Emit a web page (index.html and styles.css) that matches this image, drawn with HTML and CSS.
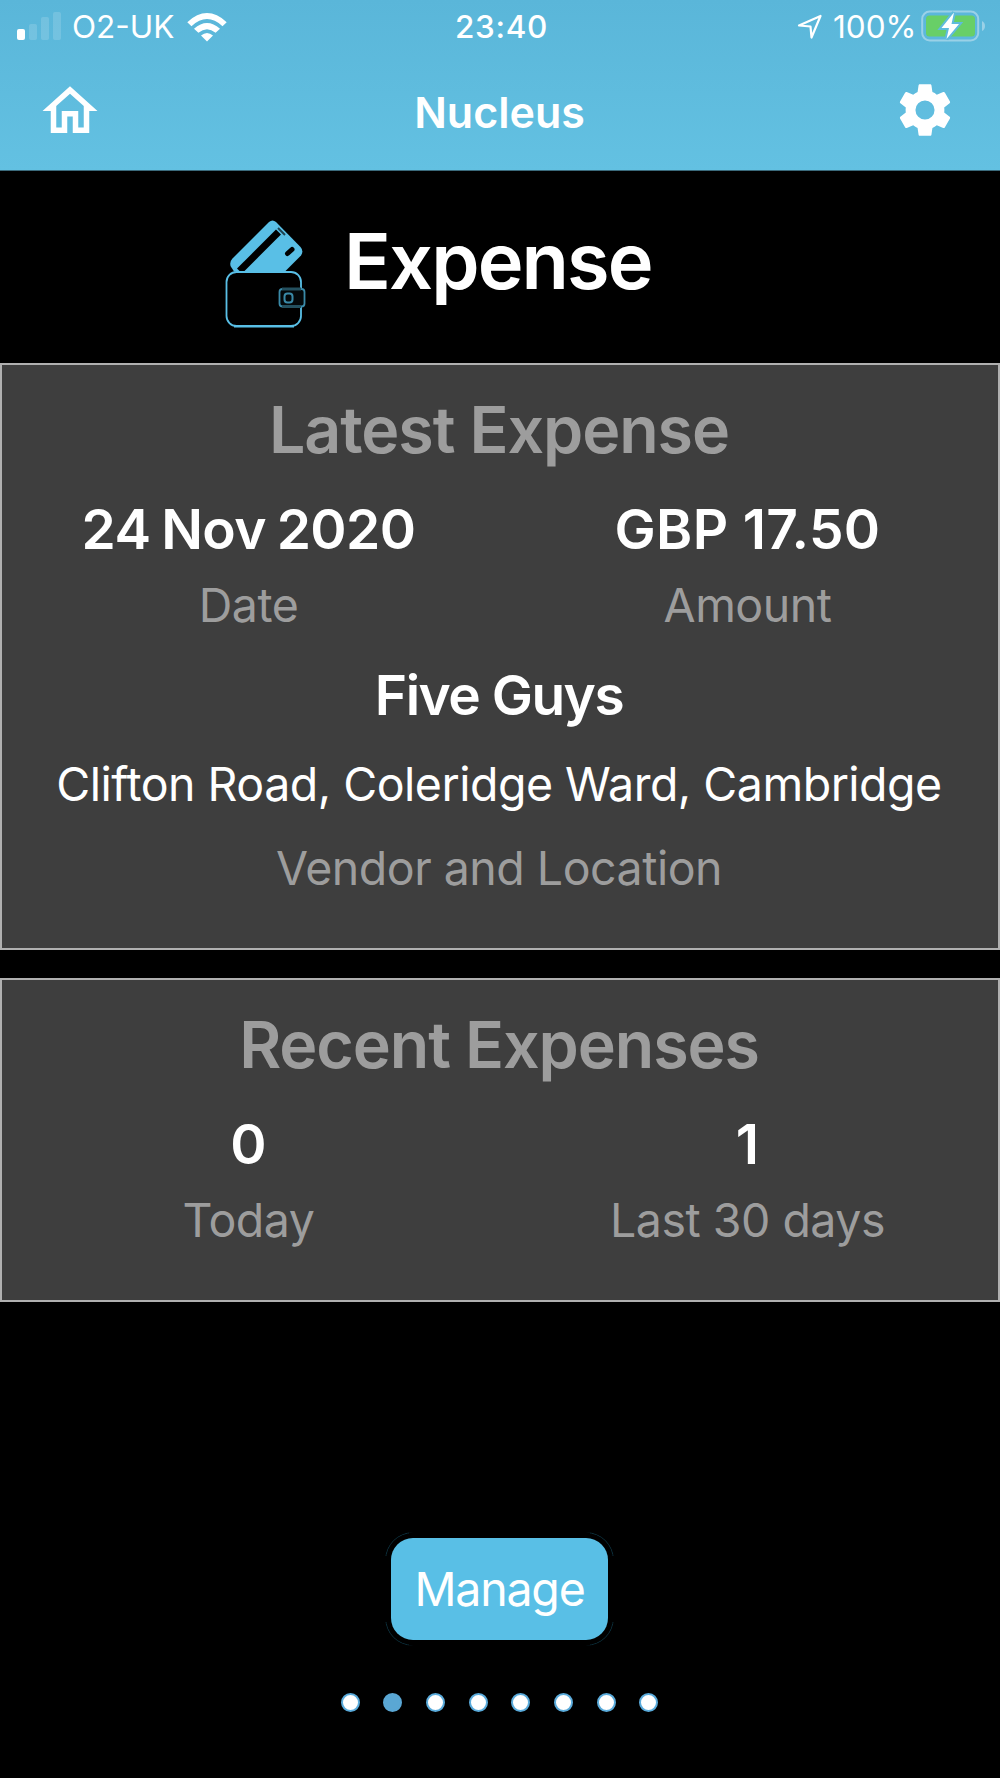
FILE: index.html
```html
<!DOCTYPE html>
<html lang="en">

<head>
    <meta charset="UTF-8">
    <meta name="viewport" content="width=device-width, initial-scale=1.0">
    <title>Nucleus</title>
    <link rel="stylesheet" href="styles.css">
</head>

<body>
    <header class="header">
        <div class="status">
            <div class="status-left">
                <svg class="signal" viewBox="0 0 44 28">
                    <rect x="0" y="17" width="8" height="11" rx="2" />
                    <g opacity=".15">
                        <rect x="12" y="12" width="8" height="16" rx="2" />
                        <rect x="24" y="5" width="8" height="23" rx="2" />
                        <rect x="36" y="0" width="8" height="28" rx="2" />
                    </g>
                </svg>
                <span class="carrier">O2-UK</span>
                <svg class="wifi" viewBox="0 0 40 29">
                    <path d="M0.3 9.2Q20 -9 39.700 9.200L35.500 13.200Q20 -1 4.500 13.200Z" />
                    <path d="M7 15.800Q20 4.200 33 15.800L28.600 19.700Q20 12.600 11.400 19.700Z" />
                    <path d="M14 22.600Q20 17.400 26 22.600L20 28.600Z" />
                </svg>
            </div>
            <span class="time">23:40</span>
            <div class="status-right">
                <svg class="location" viewBox="0 0 26 26">
                    <path d="M2 11.500L23.500 2L14.500 23.500L13.500 12.500Z" />
                </svg>
                <span class="percent">100%</span>
                <svg class="battery" viewBox="0 0 65 32">
                    <rect class="battery-case" x="1.200" y="1.500" width="56" height="29" rx="7.500" />
                    <path class="battery-cap" d="M61 11q3 1.500 3 5t-3 5z" />
                    <rect class="battery-level" x="5" y="5.500" width="49" height="21" rx="3.500" />
                    <path class="bolt" d="M33 2.500L20.500 18H28L25.500 29L38 14H30.500Z" />
                </svg>
            </div>
        </div>
        <nav class="nav">
            <svg class="home" viewBox="0 0 24 24">
                <path d="M12 5.690l5 4.500V18h-2v-6H9v6H7v-7.810l5-4.500M12 3L2 12h3v8h6v-6h2v6h6v-8h3L12 3z" />
            </svg>
            <h1 class="app-name">Nucleus</h1>
            <svg class="settings" viewBox="0 0 24 24">
                <path d="M19.430 12.980c.04-.32.07-.64.07-.98s-.03-.66-.07-.98l2.110-1.650c.19-.15.24-.42.12-.64l-2-3.460c-.12-.22-.39-.3-.61-.22l-2.490 1c-.52-.4-1.080-.73-1.690-.98l-.38-2.650C14.460 2.180 14.250 2 14 2h-4c-.25 0-.46.18-.49.42l-.38 2.650c-.61.25-1.170.59-1.690.98l-2.490-1c-.23-.09-.49 0-.61.22l-2 3.460c-.13.22-.07.49.12.64l2.110 1.650c-.04.32-.07.65-.07.98s.03.66.07.98l-2.110 1.650c-.19.15-.24.42-.12.64l2 3.460c.12.22.39.3.61.22l2.490-1c.52.4 1.080.73 1.690.98l.38 2.650c.03.24.24.42.49.42h4c.25 0 .46-.18.49-.42l.38-2.650c.61-.25 1.170-.59 1.690-.98l2.490 1c.23.09.49 0 .61-.22l2-3.460c.12-.22.07-.49-.12-.64l-2.110-1.650zM12 15.700a3.700 3.700 0 1 1 0-7.400 3.700 3.700 0 0 1 0 7.400z" />
            </svg>
        </nav>
    </header>

    <main>
        <div class="page-title">
            <svg class="wallet" viewBox="0 0 81 108">
                <path class="card-shape" d="M44 2Q47.500 -1 51 2L75.500 27Q79 31 76 35.500L60 51.500H9L5.500 46Q4.500 41.500 7.500 38.500Z" />
                <path class="card-stripe" d="M53.500 12L14.500 51" />
                <path class="card-edge" d="M53 8L60 15" />
                <path class="card-chip" d="M62.500 33.500L67 29.500" />
                <rect class="wallet-body" x="1.500" y="52" width="74.500" height="54" rx="10" />
                <path class="wallet-base" d="M9 106.200H69" />
                <rect class="clasp" x="54.500" y="69" width="25" height="17.500" rx="3" />
                <path class="clasp-shade" d="M57 69H76M57 86.500H76" />
                <rect class="clasp-button" x="59.500" y="73.500" width="8" height="9" rx="3" />
            </svg>
            <h2>Expense</h2>
        </div>

        <section class="card latest">
            <h3>Latest Expense</h3>
            <div class="columns">
                <div>
                    <p class="value date">24 Nov 2020</p>
                    <p class="label">Date</p>
                </div>
                <div>
                    <p class="value amount">GBP 17.50</p>
                    <p class="label">Amount</p>
                </div>
            </div>
            <p class="value vendor">Five Guys</p>
            <p class="address">Clifton Road, Coleridge Ward, Cambridge</p>
            <p class="label location-label">Vendor and Location</p>
        </section>

        <section class="card recent">
            <h3>Recent Expenses</h3>
            <div class="columns">
                <div>
                    <p class="value">0</p>
                    <p class="label">Today</p>
                </div>
                <div>
                    <p class="value">1</p>
                    <p class="label">Last 30 days</p>
                </div>
            </div>
        </section>
    </main>

    <footer class="footer">
        <button class="manage">Manage</button>
        <div class="dots">
            <span class="dot"></span>
            <span class="dot active"></span>
            <span class="dot"></span>
            <span class="dot"></span>
            <span class="dot"></span>
            <span class="dot"></span>
            <span class="dot"></span>
            <span class="dot"></span>
        </div>
    </footer>
</body>

</html>
```
FILE: styles.css
```css
* {
    box-sizing: border-box;
}

body {
    margin: 0;
    min-height: 1778px;
    display: flex;
    flex-direction: column;
    background: #000;
    color: #fff;
    font-family: Inter, "Liberation Sans", sans-serif;
}

h1, h2, h3, p {
    margin: 0;
    font-weight: 600;
}

svg {
    display: block;
    flex: none;
    fill: #fff;
}

/* Header */
.header {
    height: 171px;
    background: linear-gradient(#5ab6d9, #63c1e2);
    border-bottom: 1px solid #3b6a7b;
}

.status {
    display: grid;
    grid-template-columns: 1fr auto 1fr;
    height: 54px;
    padding: 0 14px 0 17px;
    align-items: center;
    font-size: 31.5px;
    line-height: 54px;
}

.status-left,
.status-right {
    display: flex;
    align-items: center;
}

.status-right {
    justify-content: flex-end;
}

.signal {
    width: 44px;
    height: 28px;
    margin: 0 11px 2px 0;
}

.carrier {
    width: 115px;
}

.wifi {
    width: 40px;
    height: 29px;
}

.time {
    font-weight: 500;
    letter-spacing: 0.7px;
}

.location {
    width: 26px;
    height: 26px;
    margin-right: 10px;
    fill: none;
    stroke: #fff;
    stroke-width: 2.2;
    stroke-linejoin: round;
}

.percent {
    width: 88px;
}

.battery {
    width: 65px;
    height: 32px;
    margin-bottom: 2px;
}

.battery-case {
    fill: none;
    stroke: #9ad1e7;
    stroke-width: 2;
}

.battery-cap {
    fill: #9ad1e7;
}

.battery-level {
    fill: #68cf67;
}

.bolt {
    stroke: #5fbbdc;
    stroke-width: 4;
    paint-order: stroke;
}

.nav {
    display: grid;
    grid-template-columns: 66px 1fr 66px;
    padding: 24px 42px 0 37px;
}

.home {
    width: 66px;
    height: 66px;
}

.app-name {
    padding-left: 4px;
    font-size: 43px;
    line-height: 68px;
    text-align: center;
}

.settings {
    width: 62px;
    height: 62px;
    margin: 1px 0 0 2px;
}

/* Page title */
.page-title {
    display: flex;
    height: 192px;
    padding: 49px 0 0 225px;
    gap: 38px;
}

.wallet {
    width: 81px;
    height: 108px;
    fill: none;
    stroke: #59bfe6;
}

.card-shape {
    fill: #59bfe6;
    stroke: none;
}

.card-stripe {
    stroke: #000;
    stroke-width: 7;
}

.card-edge {
    stroke: #1d4250;
    stroke-width: 2;
}

.card-chip {
    stroke: #000;
    stroke-width: 5;
    stroke-linecap: round;
}

.wallet-body {
    fill: #000;
    stroke-width: 1.8;
}

.wallet-base {
    stroke-width: 2.6;
}

.clasp {
    fill: #04090b;
    stroke: #3a8aa8;
    stroke-width: 1.8;
}

.clasp-shade {
    stroke: #24505f;
    stroke-width: 3;
}

.clasp-button {
    stroke: #3a8aa8;
    stroke-width: 2;
}

.page-title h2 {
    font-size: 77.5px;
    line-height: 82px;
    letter-spacing: -1.9px;
}

/* Cards */
.card {
    padding: 28px 2px 0 0;
    background: #3e3e3e;
    border: 2px solid #b0b0b0;
    text-align: center;
}

.card h3 {
    margin-bottom: 30px;
    color: #9d9d9d;
    font-size: 64.5px;
    line-height: 75px;
    letter-spacing: -1.1px;
}

.latest {
    height: 587px;
    margin-bottom: 28px;
}

.recent {
    height: 324px;
}

.columns {
    display: grid;
    grid-template-columns: 493px 1fr;
    margin-right: -4px;
}

.value {
    font-size: 55px;
    line-height: 62px;
}

.date {
    letter-spacing: -0.6px;
    word-spacing: -2.5px;
}

.amount {
    letter-spacing: 0.35px;
}

.label,
.address {
    font-size: 46.5px;
    line-height: 54px;
    font-weight: 400;
    letter-spacing: -0.5px;
}

.label {
    color: #9d9d9d;
}

.columns .label {
    margin-top: 18px;
}

.vendor {
    margin-top: 32px;
    letter-spacing: -1.5px;
}

.address {
    margin-top: 31px;
}

.location-label {
    margin-top: 30px;
}

/* Footer */
.footer {
    display: flex;
    flex-direction: column;
    align-items: center;
    margin-top: 236px;
}

.manage {
    position: relative;
    width: 217px;
    height: 102px;
    margin-right: 1px;
    padding: 0;
    border: 0;
    border-radius: 22px;
    background: #59bfe6;
    color: #fff;
    font: 400 46.5px/102px Inter, "Liberation Sans", sans-serif;
    letter-spacing: -1.2px;
}

/* faint arcs round the corners of the button */
.manage::before {
    content: "";
    position: absolute;
    inset: -6px;
    border: 1px solid #0d3340;
    border-radius: 28px;
    mask: linear-gradient(90deg, #000 24px, transparent 24px calc(100% - 24px), #000 0),
        linear-gradient(#000 24px, transparent 24px calc(100% - 24px), #000 0);
    mask-composite: intersect;
}

.dots {
    display: flex;
    gap: 23.67px;
    margin: 53px 1px 0 0;
}

.dot {
    width: 19px;
    height: 19px;
    border: 2.5px solid #5aabdb;
    border-radius: 50%;
    background: #fff;
}

.dot.active {
    background: #5aa7d4;
    border-color: #5aa7d4;
}
```
